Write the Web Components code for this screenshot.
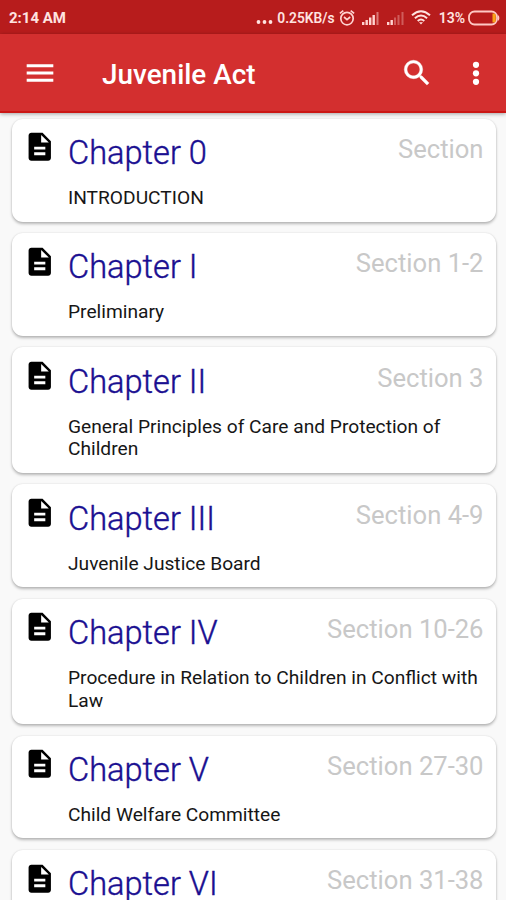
<!DOCTYPE html>
<html lang="en">
<head>
<meta charset="utf-8">
<title>Juvenile Act</title>
<style>
html,body{margin:0;height:100%;overflow:hidden;background:#f9f9f9;font-family:Roboto,"Liberation Sans",sans-serif}
</style>
</head>
<body>
<juvenile-app></juvenile-app>
<script>
const define = (name, html) => customElements.define(name, class extends HTMLElement {
  connectedCallback() {
    if (this.shadowRoot) return;
    const t = document.createElement('template');
    t.innerHTML = html;
    this.attachShadow({mode: 'open'}).append(t.content.cloneNode(true));
  }
});

define('status-bar', `
<style>
:host{display:flex;align-items:center;height:34px;padding:1px 6px 0 9px;box-sizing:border-box;background:#b71c1c;color:#ffe3e0;font-size:14.5px;font-weight:600;line-height:17px}
.time{margin:1px auto 0 0;font-size:15px;font-weight:700}
svg{display:block;flex:none}
.dots{margin-right:4px}
.rate{font-size:13.8px;margin-top:1px}
.alarm{margin-left:4px}
.sig{margin-left:6px}
.sig2{margin-left:6px}
.wifi{margin-left:6px}
.pct{margin:1px 0 0 8px;font-size:14px}
.bat{margin-left:3px}
</style>
<span class="time">2:14 AM</span>
<svg class="dots" width="17" height="14" fill="#ffe3e0"><circle cx="2.5" cy="11" r="1.9"/><circle cx="8.5" cy="11" r="1.9"/><circle cx="14.5" cy="11" r="1.9"/></svg>
<span class="rate">0.25KB/s</span>
<svg class="alarm" width="16" height="18" viewBox="0 0 16 18" fill="none" stroke="#ffd3d0" stroke-width="1.7"><circle cx="8" cy="9.6" r="6.2"/><path d="M.9 4.4 4.3 1.6M15.1 4.4 11.7 1.6M5 8l3 2.6L11.2 8"/></svg>
<svg class="sig" width="19" height="14" fill="#ffd3d0"><path d="M1 11h2.400v3H1zM4.500 9h2.400v5H4.500zM8 6.500h2.400V14H8zM11.500 4h2.400v10h-2.400z"/><path d="M15.500 1h2v13h-2z" opacity=".5"/></svg>
<svg class="sig2" width="19" height="14" fill="#ffd3d0"><path d="M1 11h2.400v3H1zM4.500 9h2.400v5H4.500z"/><path d="M8 6.500h2V14H8zM11.500 4h2v10h-2zM15.500 1h2v13h-2z" opacity=".35"/></svg>
<svg class="wifi" width="20" height="15" viewBox="0 0 20 15" fill="none" stroke="#ffe3e0" stroke-width="2"><path d="M1 5.300Q10-2.700 19 5.300M3.900 8.200Q10 2.900 16.100 8.200M6.700 10.900Q10 8.200 13.300 10.900"/><path d="M8 12.200h4L10 14.600z" fill="#ffe3e0" stroke="none"/></svg>
<span class="pct">13%</span>
<svg class="bat" width="32" height="16" viewBox="0 0 32 16"><rect x="1" y="1.500" width="28" height="13" rx="5.500" fill="none" stroke="#ffc9c5" stroke-width="1.800"/><path d="M24.500 3.500h1.500q1.800 0 1.800 1.800v5.400q0 1.800-1.800 1.800h-1.500z" fill="#f9a31a"/><path d="M30 5q1.400 1 1.400 3T30 11z" fill="#ffc9c5"/></svg>
`);

define('app-bar', `
<style>
:host{display:flex;align-items:center;height:79px;padding:0 13px 0 23px;box-sizing:border-box;background:#d32f2f;border-bottom:2px solid #cb1715;box-shadow:0 1px 4px rgba(0,0,0,.35);position:relative;color:#fff}
svg{display:block;flex:none;fill:#fff}
h1{margin:4px auto 0 45px;font-size:27.900px;line-height:32px;font-weight:500}
.search{margin:1px 25.500px 0 0}
</style>
<svg width="34" height="34" viewBox="0 0 24 24"><path d="M2.600 18.200h18.800v-2.200H2.600zM2.600 13.100h18.800v-2.200H2.600zM2.600 5.800V8h18.800V5.800z"/></svg>
<h1><slot></slot></h1>
<svg class="search" width="34" height="34" viewBox="0 0 24 24" stroke="#fff" stroke-width=".3"><path d="M15.500 14h-.79l-.28-.27A6.471 6.471 0 0 0 16 9.500 6.500 6.500 0 1 0 9.500 16c1.610 0 3.090-.59 4.230-1.570l.27.28v.79l5 4.990L20.490 19l-4.990-5zm-6 0C7.010 14 5 11.990 5 9.500S7.010 5 9.500 5 14 7.010 14 9.500 11.990 14 9.500 14z"/></svg>
<svg width="34" height="34" viewBox="0 0 24 24"><circle cx="12" cy="6.200" r="2.200"/><circle cx="12" cy="12.200" r="2.200"/><circle cx="12" cy="18.200" r="2.200"/></svg>
`);

define('chapter-card', `
<style>
:host{display:grid;grid-template-columns:56.500px 1fr auto;box-sizing:border-box;padding:15.300px 12px 11.800px 0;background:#fff;border-radius:11px;box-shadow:0 2px 3px rgba(0,0,0,.26),0 0 2px rgba(0,0,0,.12);color:#161616}
svg{display:block;margin:-3.500px 0 0 11.500px}
.title{font-size:32.600px;line-height:38px;color:#1a0f91;font-weight:300;-webkit-text-stroke:.4px #1a0f91;white-space:nowrap}
.section{font-size:25.600px;line-height:30px;color:#c8c8c8}
.body{grid-column:2/4;margin-top:15.200px;font-size:19.180px;line-height:22.700px}
</style>
<svg width="33.500" height="33.500" viewBox="0 0 24 24"><path d="M14 2H6c-1.100 0-2 .9-2 2v16c0 1.100.9 2 2 2h12c1.100 0 2-.9 2-2V8l-6-6zm2 16H8v-2h8v2zm0-4H8v-2h8v2zm-3-5V3.500L18.500 9H13z"/></svg>
<div class="title"><slot name="title"></slot></div>
<div class="section"><slot name="section"></slot></div>
<div class="body"><slot></slot></div>
`);

define('chapter-list', `
<style>
:host{display:flex;flex-direction:column;gap:11.300px;padding:5.700px 10.500px 0 11.500px}
</style><slot></slot>`);

define('juvenile-app', `
<style>
:host{display:block;height:900px;overflow:hidden}
app-bar{z-index:1}
</style>
<status-bar></status-bar>
<app-bar>Juvenile Act</app-bar>
<chapter-list>${[
  ['0', '', 'INTRODUCTION'],
  ['I', ' 1-2', 'Preliminary'],
  ['II', ' 3', 'General Principles of Care and Protection of Children'],
  ['III', ' 4-9', 'Juvenile Justice Board'],
  ['IV', ' 10-26', 'Procedure in Relation to Children in Conflict with Law'],
  ['V', ' 27-30', 'Child Welfare Committee'],
  ['VI', ' 31-38', '']
].map(([n, s, b]) => `<chapter-card><span slot="title">Chapter ${n}</span><span slot="section">Section${s}</span>${b}</chapter-card>`).join('')}</chapter-list>
`);
</script>
</body>
</html>
